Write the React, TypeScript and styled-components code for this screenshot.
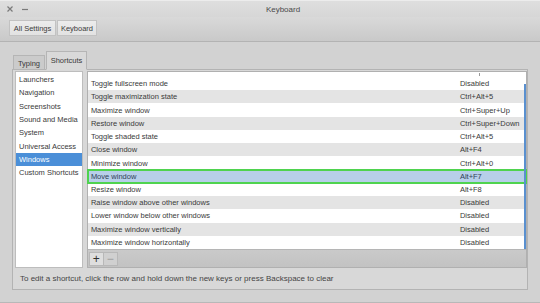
import React from "react";
import styled, { createGlobalStyle } from "styled-components";

const Global = createGlobalStyle`
  html, body { margin: 0; padding: 0; }
  body { width: 540px; height: 303px; overflow: hidden; background: #cfcfcf; }
  * { box-sizing: border-box; }
`;

const Window = styled.div`
  width: 540px;
  height: 303px;
  display: flex;
  flex-direction: column;
  background: #d2d2d2;
  font-family: "Liberation Sans", Arial, sans-serif;
  font-size: 8px;
  color: #3a3a3a;
  border-bottom: 1px solid #b8b8b8;
`;

const TitleBar = styled.div`
  height: 17px;
  position: relative;
  display: flex;
  align-items: center;
  justify-content: center;
  background: linear-gradient(#dedede, #d6d6d6);
  border-top: 1px solid #ececec;
`;

const TitleText = styled.div`
  font-size: 8px;
  color: #4a4a4a;
  margin-left: 26px;
`;

const WinButtons = styled.div`
  position: absolute;
  left: 7px;
  top: 2px;
  display: flex;
  gap: 9px;
  align-items: center;
  height: 12px;
`;

const Toolbar = styled.div`
  height: 25px;
  display: flex;
  align-items: flex-start;
  padding: 3px 0 0 9px;
  background: linear-gradient(#d9d9d9, #c9c9c9);
  border-bottom: 1px solid #b3b3b3;
`;

const ToolButton = styled.div<{ $w: number }>`
  width: ${(p) => p.$w}px;
  height: 16px;
  display: flex;
  align-items: center;
  justify-content: center;
  background: linear-gradient(#ececec, #e2e2e2);
  border: 1px solid #c2c2c2;
  margin-right: 1px;
  color: #3c3c3c;
  font-size: 7.5px;
`;

const Body = styled.div`
  flex: 1;
  display: flex;
  flex-direction: column;
  padding: 10px 12px 0 12px;
`;

const Tabs = styled.div`
  display: flex;
  align-items: flex-end;
  height: 18px;
  padding-left: 1px;
  position: relative;
  z-index: 1;
  margin-bottom: -1px;
`;

const Tab = styled.div<{ $active?: boolean; $w: number }>`
  width: ${(p) => p.$w}px;
  height: ${(p) => (p.$active ? 19 : 15)}px;
  display: flex;
  align-items: center;
  justify-content: center;
  border: 1px solid #b5b5b5;
  border-bottom: ${(p) => (p.$active ? "1px solid #d9d9d9" : "1px solid #b5b5b5")};
  background: ${(p) => (p.$active ? "#d9d9d9" : "#cbcbcb")};
  margin-right: 1px;
  color: #3a3a3a;
  font-size: 7.5px;
  padding-top: ${(p) => (p.$active ? 0 : 1)}px;
`;

const Page = styled.div`
  width: 516px;
  height: 221px;
  border: 1px solid #b3b3b3;
  background: #d8d8d8;
  display: flex;
  flex-direction: column;
  padding: 1px 0 0 2px;
`;

const Panes = styled.div`
  display: flex;
  gap: 4px;
  height: 197px;
`;

const SideList = styled.div`
  width: 68px;
  background: #ffffff;
  border: 1px solid #bdbdbd;
  padding-top: 1px;
  display: flex;
  flex-direction: column;
`;

const SideItem = styled.div<{ $selected?: boolean }>`
  height: 13.333px;
  line-height: 13.333px;
  padding-left: 3px;
  font-size: 7.5px;
  white-space: nowrap;
  background: ${(p) => (p.$selected ? "#4b8fd8" : "transparent")};
  color: ${(p) => (p.$selected ? "#ffffff" : "#3a3a3a")};
`;

const TreePanel = styled.div`
  width: 441px;
  border: 1px solid #b0b0b0;
  display: flex;
  flex-direction: column;
`;

const Tree = styled.div`
  position: relative;
  background: #ffffff;
  height: 178px;
  padding-top: 5px;
  display: flex;
  flex-direction: column;
  border-bottom: 1px solid #b5b5b5;
`;

const HeaderMark = styled.div`
  position: absolute;
  top: 1px;
  left: 391px;
  width: 1px;
  height: 3px;
  background: #9a9a9a;
`;

const Row = styled.div<{ $alt?: boolean; $sel?: boolean }>`
  height: 13.333px;
  display: grid;
  grid-template-columns: 369px 1fr;
  align-items: center;
  padding-left: 3px;
  font-size: 7.5px;
  white-space: nowrap;
  background: ${(p) => (p.$sel ? "#b7cfe9" : p.$alt ? "#e4e4e4" : "#ffffff")};
  color: ${(p) => (p.$sel ? "#2f3f55" : "#3a3a3a")};
  ${(p) => (p.$sel ? "outline: 2px solid #4fd34f; outline-offset: -1px; position: relative;" : "")}
`;

const Scroll = styled.div`
  position: absolute;
  right: 0;
  top: 12px;
  bottom: 0;
  width: 2px;
  background: #5a90cf;
`;

const ListToolbar = styled.div`
  flex: 1;
  display: flex;
  align-items: center;
  padding-left: 1px;
  background: linear-gradient(#cacaca, #c2c2c2);
`;

const SmallButton = styled.div<{ $disabled?: boolean }>`
  width: 15px;
  height: 14px;
  display: flex;
  align-items: center;
  justify-content: center;
  background: ${(p) => (p.$disabled ? "#d0d0d0" : "#dedede")};
  border: 1px solid #b8b8b8;
  margin-right: -1px;
  color: ${(p) => (p.$disabled ? "#9a9a9a" : "#2f2f2f")};
  font-size: 12px;
  line-height: 1;
`;

const Help = styled.div`
  flex: 1;
  display: flex;
  align-items: center;
  padding-left: 5px;
  padding-bottom: 1px;
  color: #454545;
  white-space: nowrap;
`;

const categories = [
  "Launchers",
  "Navigation",
  "Screenshots",
  "Sound and Media",
  "System",
  "Universal Access",
  "Windows",
  "Custom Shortcuts",
];

const rows: [string, string][] = [
  ["Toggle fullscreen mode", "Disabled"],
  ["Toggle maximization state", "Ctrl+Alt+5"],
  ["Maximize window", "Ctrl+Super+Up"],
  ["Restore window", "Ctrl+Super+Down"],
  ["Toggle shaded state", "Ctrl+Alt+5"],
  ["Close window", "Alt+F4"],
  ["Minimize window", "Ctrl+Alt+0"],
  ["Move window", "Alt+F7"],
  ["Resize window", "Alt+F8"],
  ["Raise window above other windows", "Disabled"],
  ["Lower window below other windows", "Disabled"],
  ["Maximize window vertically", "Disabled"],
  ["Maximize window horizontally", "Disabled"],
];

export default function App() {
  return (
    <>
      <Global />
      <Window>
        <TitleBar>
          <WinButtons>
            <svg width="6" height="6" viewBox="0 0 6 6">
              <path d="M0.5 0.5L5.5 5.5M5.5 0.5L0.5 5.5" stroke="#7a7a7a" strokeWidth="1.2" />
            </svg>
            <svg width="6" height="6" viewBox="0 0 6 6">
              <path d="M0 3.5H6" stroke="#7a7a7a" strokeWidth="1.2" />
            </svg>
          </WinButtons>
          <TitleText>Keyboard</TitleText>
        </TitleBar>
        <Toolbar>
          <ToolButton $w={47}>All Settings</ToolButton>
          <ToolButton $w={40}>Keyboard</ToolButton>
        </Toolbar>
        <Body>
          <Tabs>
            <Tab $w={32}>Typing</Tab>
            <Tab $w={41} $active>
              Shortcuts
            </Tab>
          </Tabs>
          <Page>
            <Panes>
              <SideList>
                {categories.map((c) => (
                  <SideItem key={c} $selected={c === "Windows"}>
                    {c}
                  </SideItem>
                ))}
              </SideList>
              <TreePanel>
                <Tree>
                  <HeaderMark />
                  {rows.map(([a, b], i) => (
                    <Row key={a} $alt={i % 2 === 1} $sel={a === "Move window"}>
                      <span>{a}</span>
                      <span>{b}</span>
                    </Row>
                  ))}
                  <Scroll />
                </Tree>
                <ListToolbar>
                  <SmallButton>+</SmallButton>
                  <SmallButton $disabled>−</SmallButton>
                </ListToolbar>
              </TreePanel>
            </Panes>
            <Help>To edit a shortcut, click the row and hold down the new keys or press Backspace to clear</Help>
          </Page>
        </Body>
      </Window>
    </>
  );
}
